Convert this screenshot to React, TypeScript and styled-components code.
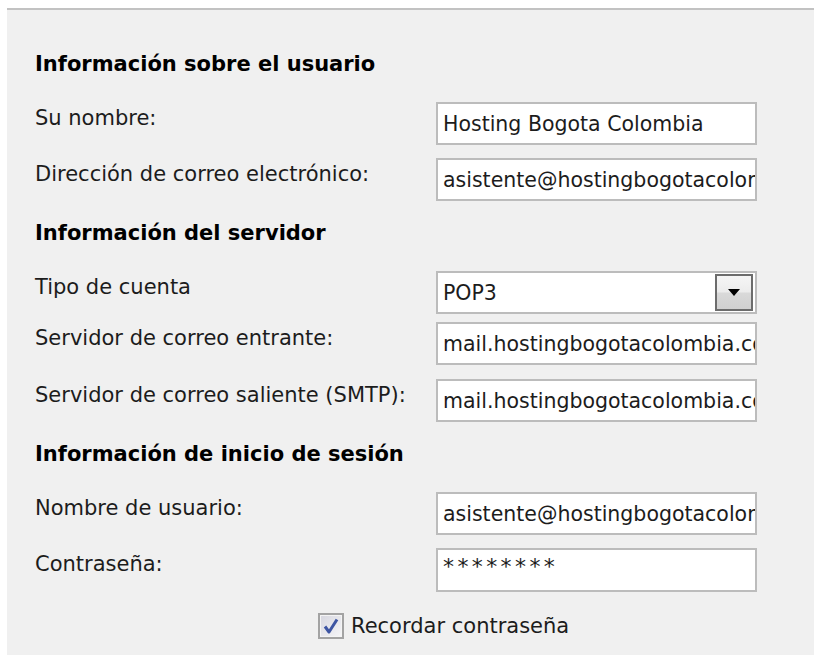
import React from "react";
import styled, { createGlobalStyle } from "styled-components";

const GlobalStyle = createGlobalStyle`
  html, body {
    margin: 0;
    padding: 0;
    background: #ffffff;
  }
  body {
    font-family: "DejaVu Sans", Tahoma, Verdana, sans-serif;
    color: #1c1c1c;
  }
  * { box-sizing: border-box; }
`;

const Panel = styled.div`
  margin: 8px 0 0 7px;
  min-height: 647px;
  background: #f0f0f0;
  border-top: 2px solid #c2c2c2;
  padding: 42px 0 0 28px;
  display: flex;
  flex-direction: column;
`;

const Heading = styled.h2<{ $first?: boolean }>`
  margin: ${(p) => (p.$first ? "0" : "20px")} 0 0 0;
  font-size: 21px;
  line-height: 25px;
  font-weight: bold;
  color: #000000;
`;

const Fields = styled.div`
  margin-top: 25px;
  display: flex;
  flex-direction: column;
`;

const Row = styled.div<{ $gap: number }>`
  margin-top: ${(p) => p.$gap}px;
  display: grid;
  grid-template-columns: 401px 321px;
  align-items: start;
`;

const Label = styled.label<{ $offset?: number }>`
  font-size: 21px;
  line-height: 25px;
  padding-top: ${(p) => p.$offset ?? 4}px;
  color: #1c1c1c;
  white-space: nowrap;
`;

const TextBox = styled.input<{ $secret?: boolean }>`
  display: block;
  width: 321px;
  height: ${(p) => (p.$secret ? 44 : 43)}px;
  border: 2px solid #bcbcbc;
  background: #ffffff;
  padding: ${(p) => (p.$secret ? "0 0 8px 5px" : "0 0 0 5px")};
  margin: 0;
  font-family: "DejaVu Sans", Tahoma, Verdana, sans-serif;
  font-size: ${(p) => (p.$secret ? 22 : 20.5)}px;
  color: #1c1c1c;
  letter-spacing: ${(p) => (p.$secret ? 3.4 : 0)}px;
  outline: none;
`;

const Select = styled.div`
  position: relative;
  width: 321px;
  height: 43px;
  border: 2px solid #bcbcbc;
  background: #ffffff;
  display: flex;
  align-items: center;
  padding-left: 5px;
  font-size: 20.5px;
  color: #1c1c1c;
`;

const SelectButton = styled.span`
  position: absolute;
  right: 2px;
  top: 1px;
  bottom: 1px;
  width: 38px;
  border: 2px solid #6c6c6c;
  background: linear-gradient(
    to bottom,
    #f5f5f5 0%,
    #ececec 48%,
    #d9d9d9 52%,
    #d0d0d0 100%
  );
  display: flex;
  align-items: center;
  justify-content: center;
`;

const CheckRow = styled.label`
  margin-top: 21px;
  padding-left: 283px;
  display: flex;
  align-items: center;
  gap: 7px;
  font-size: 21px;
  line-height: 25px;
  color: #1c1c1c;
`;

const CheckBox = styled.span`
  width: 26px;
  height: 26px;
  border: 2px solid #a3a3a3;
  background: linear-gradient(to bottom right, #d6d6df, #f6f6f8);
  box-shadow: inset 0 0 0 1px #f4f4f4;
  display: flex;
  align-items: center;
  justify-content: center;
`;

type Field = {
  label: string;
  value?: string;
  kind?: "select" | "secret";
  gap: number;
  offset?: number;
};

const Section: React.FC<{ title: string; first?: boolean; fields: Field[] }> = ({
  title,
  first,
  fields,
}) => (
  <>
    <Heading $first={first}>{title}</Heading>
    <Fields>
      {fields.map((f) => (
        <Row key={f.label} $gap={f.gap}>
          <Label $offset={f.offset}>{f.label}</Label>
          {f.kind === "select" ? (
            <Select>
              {f.value}
              <SelectButton>
                <svg width="12" height="7" viewBox="0 0 12 7">
                  <path d="M0 0 H12 L6 7 Z" fill="#000" />
                </svg>
              </SelectButton>
            </Select>
          ) : (
            <TextBox readOnly value={f.value} $secret={f.kind === "secret"} />
          )}
        </Row>
      ))}
    </Fields>
  </>
);

export default function App() {
  return (
    <>
      <GlobalStyle />
      <Panel>
        <Section
          first
          title="Información sobre el usuario"
          fields={[
            { label: "Su nombre:", value: "Hosting Bogota Colombia", gap: 0 },
            {
              label: "Dirección de correo electrónico:",
              value: "asistente@hostingbogotacolombia.com",
              gap: 13,
            },
          ]}
        />
        <Section
          title="Información del servidor"
          fields={[
            { label: "Tipo de cuenta", value: "POP3", kind: "select", gap: 0, offset: 4 },
            {
              label: "Servidor de correo entrante:",
              value: "mail.hostingbogotacolombia.com",
              gap: 8,
            },
            {
              label: "Servidor de correo saliente (SMTP):",
              value: "mail.hostingbogotacolombia.com",
              gap: 14,
            },
          ]}
        />
        <Section
          title="Información de inicio de sesión"
          fields={[
            {
              label: "Nombre de usuario:",
              value: "asistente@hostingbogotacolombia.com",
              gap: 0,
            },
            { label: "Contraseña:", value: "********", kind: "secret", gap: 13 },
          ]}
        />
        <CheckRow>
          <CheckBox>
            <svg width="18" height="18" viewBox="0 0 18 18">
              <path
                d="M3 9.5 L7 15 L15 2.5"
                fill="none"
                stroke="#3d55a3"
                strokeWidth="3"
                strokeLinejoin="round"
              />
            </svg>
          </CheckBox>
          Recordar contraseña
        </CheckRow>
      </Panel>
    </>
  );
}
